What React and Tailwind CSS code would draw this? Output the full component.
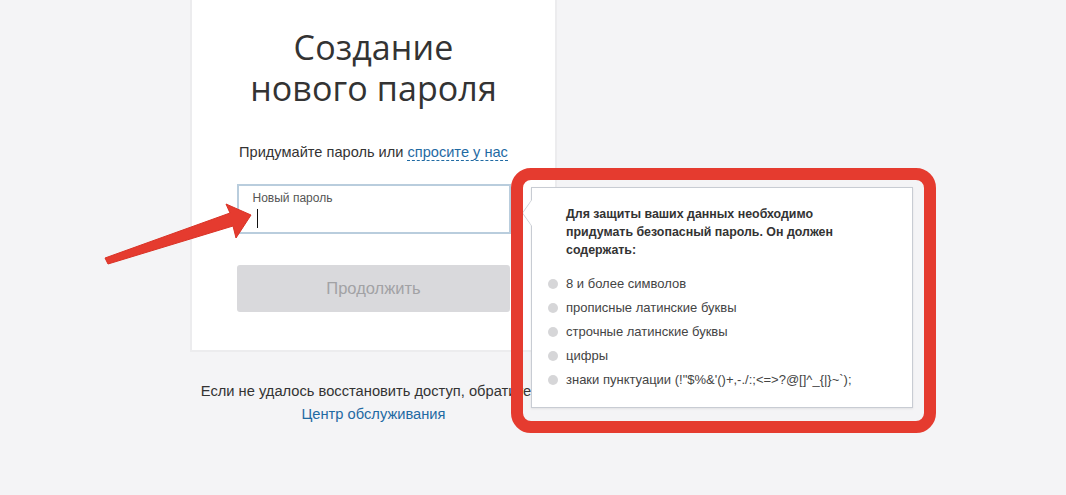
import React from 'react';

const rules = [
  '8 и более символов',
  'прописные латинские буквы',
  'строчные латинские буквы',
  'цифры',
  "знаки пунктуации (!\"$%&'()+,-./:;<=>?@[]^_{|}~`);",
];

const App = () => {
  return (
    <div
      className="relative w-[1066px] h-[495px] overflow-hidden bg-[#f4f4f6] text-[#333]"
      style={{ fontFamily: '"Liberation Sans", Arial, sans-serif' }}
    >
      <div className="ml-[190px] w-[367px] flex flex-col">
        {/* card */}
        <div className="h-[352px] bg-white border-2 border-t-0 border-[#ececee] flex flex-col items-center px-[45px]">
          <h1
            className="mt-[27px] flex flex-col items-center text-[34px] leading-[41px] text-[#333] tracking-[0.1px]"
            style={{ fontFamily: '"Open Sans", sans-serif' }}
          >
            <span>Создание</span>
            <span>нового пароля</span>
          </h1>
          <p className="mt-[34px] text-[14.6px] leading-[18px] text-[#333]">
            Придумайте пароль или{' '}
            <span className="text-[#1f6aa3] border-b border-dashed border-[#1f6aa3]">спросите у нас</span>
          </p>
          <div className="mt-[23px] w-[274px] h-[50px] border-2 border-[#b9cddd] bg-white flex flex-col pl-[14px] pt-[5px]">
            <span className="text-[12px] leading-[14px] text-[#555]">Новый пароль</span>
            <span className="mt-[4px] ml-[4px] w-px h-[19px] bg-[#111]" />
          </div>
          <button className="mt-[31px] w-[273px] h-[47px] rounded-[3px] bg-[#d9d9dc] text-[16.5px] text-[#a2a2a5]">
            Продолжить
          </button>
        </div>
        <div className="mt-[28px] w-[367px] flex flex-col items-center text-[14.7px] leading-[23px]">
          <p className="whitespace-nowrap text-[#333]">Если не удалось восстановить доступ, обратитесь</p>
          <a className="text-[#1f6aa3]">Центр обслуживания</a>
        </div>
      </div>

      {/* password hint popup */}
      <div className="absolute left-[531px] top-[187px] w-[382px] h-[221px] bg-white border border-[#c8ccd3] shadow-[0_1px_2px_rgba(0,0,0,0.08)] pl-[16px] pr-[16px] pt-[17px]">
        <span className="absolute left-[-10px] top-[11px] w-0 h-0 border-y-[14px] border-y-transparent border-r-[10px] border-r-[#c8ccd3]" />
        <span className="absolute left-[-9px] top-[12px] w-0 h-0 border-y-[13px] border-y-transparent border-r-[9px] border-r-white" />
        <p className="pl-[18px] text-[12.4px] leading-[18px] font-bold text-[#333]">
          Для защиты ваших данных необходимо
          <br />
          придумать безопасный пароль. Он должен
          <br />
          содержать:
        </p>
        <ul className="mt-[16px] flex flex-col gap-[6px]">
          {rules.map((r) => (
            <li key={r} className="flex items-center gap-[8px] h-[18px] text-[13px] text-[#444]">
              <span className="w-[10px] h-[10px] rounded-full bg-[#d6d6d8]" />
              <span>{r}</span>
            </li>
          ))}
        </ul>
      </div>

      {/* red annotation frame */}
      <div className="absolute left-[511px] top-[168px] w-[425px] h-[265px] rounded-[20px] border-[12px] border-[#e53b2f] pointer-events-none" />

      {/* red annotation arrow */}
      <svg className="absolute left-0 top-0 pointer-events-none" width="300" height="300" viewBox="0 0 300 300">
        <polygon
          points="105,258 230,213 226,204 251,215 236,238 233,226 108,264"
          fill="#e53b2f"
          stroke="#d93226"
          strokeWidth="1"
          strokeLinejoin="round"
        />
      </svg>
    </div>
  );
};

export default App;
